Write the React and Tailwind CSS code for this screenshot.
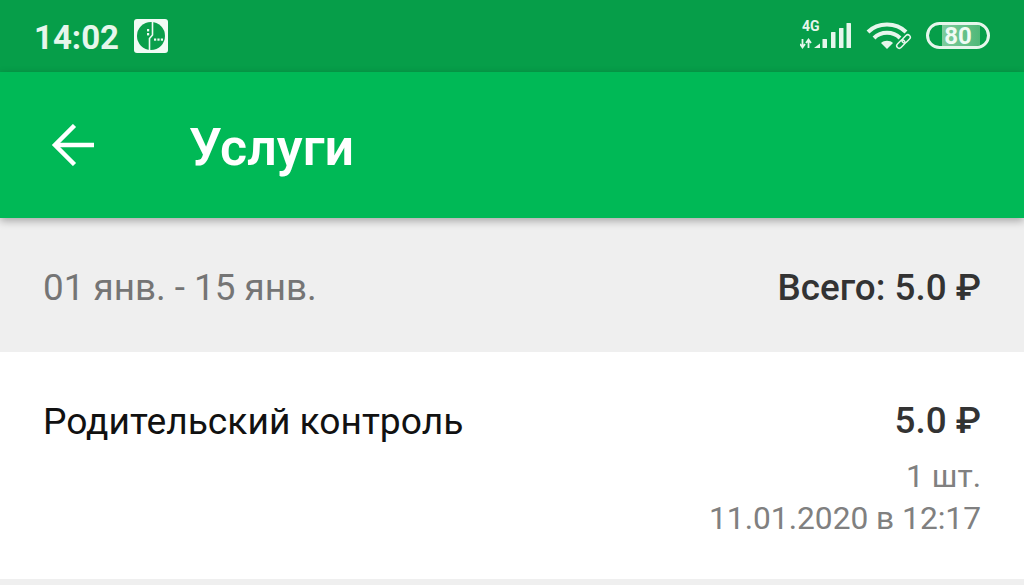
import React from 'react';

const OperatorLogo = () => (
  <svg width="34" height="34" viewBox="0 0 34 34">
    <rect width="34" height="34" rx="3" fill="#f1fbf5" />
    <circle cx="17" cy="17" r="14" fill="#0a9f4b" />
    <path d="M18.5 2.5 V16 L15.5 19.5 V32" stroke="#f1fbf5" strokeWidth="1.6" fill="none" />
    <rect x="13" y="10" width="2.2" height="2.4" fill="#f1fbf5" />
    <rect x="13" y="14" width="2.2" height="2.4" fill="#f1fbf5" />
    <rect x="20" y="19.5" width="2.2" height="2.2" fill="#f1fbf5" />
    <rect x="23.4" y="19.5" width="2.2" height="2.2" fill="#f1fbf5" />
    <rect x="26.8" y="19.5" width="2.2" height="2.2" fill="#f1fbf5" />
  </svg>
);

const Signal = () => (
  <svg width="51" height="28" viewBox="0 0 51 28" fill="#e6f6ec">
    <path d="M2.5 17 V25 M0 22 L2.5 25.5 L5 22" stroke="#e6f6ec" strokeWidth="1.8" fill="none" />
    <path d="M8.5 26 V18 M6 21 L8.5 17.5 L11 21" stroke="#e6f6ec" strokeWidth="1.8" fill="none" />
    <path d="M14 26 L20 21.5 V26 Z" />
    <rect x="22.5" y="17" width="4.5" height="9" rx="0.5" />
    <rect x="31" y="10" width="4.5" height="16" rx="0.5" />
    <rect x="39" y="6" width="4.5" height="20" rx="0.5" />
    <rect x="46.5" y="1" width="4.5" height="25" rx="0.5" />
  </svg>
);

const Wifi = () => (
  <svg width="46" height="28" viewBox="0 0 46 28" fill="none" stroke="#e6f6ec">
    <path d="M2 10 C12 0 30 0 40 10" strokeWidth="4" />
    <path d="M8 16 C15 9 27 9 34 16" strokeWidth="4" />
    <path d="M21 27 L15 21 C18 18 24 18 27 21 Z" fill="#e6f6ec" stroke="none" />
    <g transform="rotate(-45 37.5 19.5)" strokeWidth="1.5">
      <rect x="29" y="17" width="9.5" height="5" rx="2.5" />
      <rect x="36.5" y="17" width="9.5" height="5" rx="2.5" />
    </g>
  </svg>
);

const Battery = () => (
  <div className="relative -mt-[1px] flex h-[27px] w-[64px] items-center overflow-hidden rounded-full border-[3px] border-[#e6f6ec]">
    <div className="ml-[13px] h-full w-[38px] bg-gradient-to-r from-[#7fcc9e] to-[#4fb878]" />
    <span className="absolute inset-0 flex items-center justify-center text-[24px] leading-none font-bold text-[#f0fbf4]">
      80
    </span>
  </div>
);

export default function App() {
  return (
    <div className="flex h-[585px] w-[1024px] flex-col overflow-hidden bg-white font-['Roboto',sans-serif]">
      <div className="flex h-[72px] shrink-0 items-center bg-[#069e49] pr-[34px] pl-[34px] text-[#e6f6ec]">
        <span className="pt-[2px] text-[33px] leading-none font-bold">14:02</span>
        <div className="ml-[15px]">
          <OperatorLogo />
        </div>
        <div className="ml-auto flex items-center">
          <div className="relative">
            <span className="absolute top-[-3px] left-[2px] text-[14px] leading-none font-bold">4G</span>
            <Signal />
          </div>
          <div className="ml-[15px]">
            <Wifi />
          </div>
          <div className="ml-[14px]">
            <Battery />
          </div>
        </div>
      </div>

      <div className="relative z-10 flex h-[146px] shrink-0 items-center bg-[#00b956] pl-[50px] text-white shadow-[0_3px_8px_rgba(0,0,0,0.3)]">
        <svg width="46" height="42" viewBox="0 0 46 42" fill="none" stroke="white" strokeWidth="4.5">
          <path d="M44 21 H5" />
          <path d="M24.5 1.5 L5 21 L24.5 40.5" />
        </svg>
        <span className="ml-[93px] pt-[5px] text-[52px] leading-none font-semibold">Услуги</span>
      </div>

      <div className="flex h-[134px] shrink-0 items-center justify-between bg-[#efefef] pt-[5px] px-[43px]">
        <span className="text-[36.8px] text-[#757575]">01 янв. - 15 янв.</span>
        <span className="text-[36.8px] font-medium text-[#333333]">Всего: 5.0 ₽</span>
      </div>

      <div className="flex flex-1 items-start justify-between pt-[46px] px-[43px]">
        <span className="text-[37.2px] leading-[46px] text-[#111111]">Родительский контроль</span>
        <div className="flex flex-col items-end">
          <span className="text-[36.8px] leading-[46px] font-medium text-[#333333]">5.0 ₽</span>
          <span className="mt-[10px] text-[31.7px] leading-[46px] text-[#808080]">1 шт.</span>
          <span className="pt-[1px] text-[31.7px] leading-[36px] text-[#808080]">11.01.2020 в 12:17</span>
        </div>
      </div>

      <div className="h-[6px] shrink-0 bg-[#efefef]" />
    </div>
  );
}
